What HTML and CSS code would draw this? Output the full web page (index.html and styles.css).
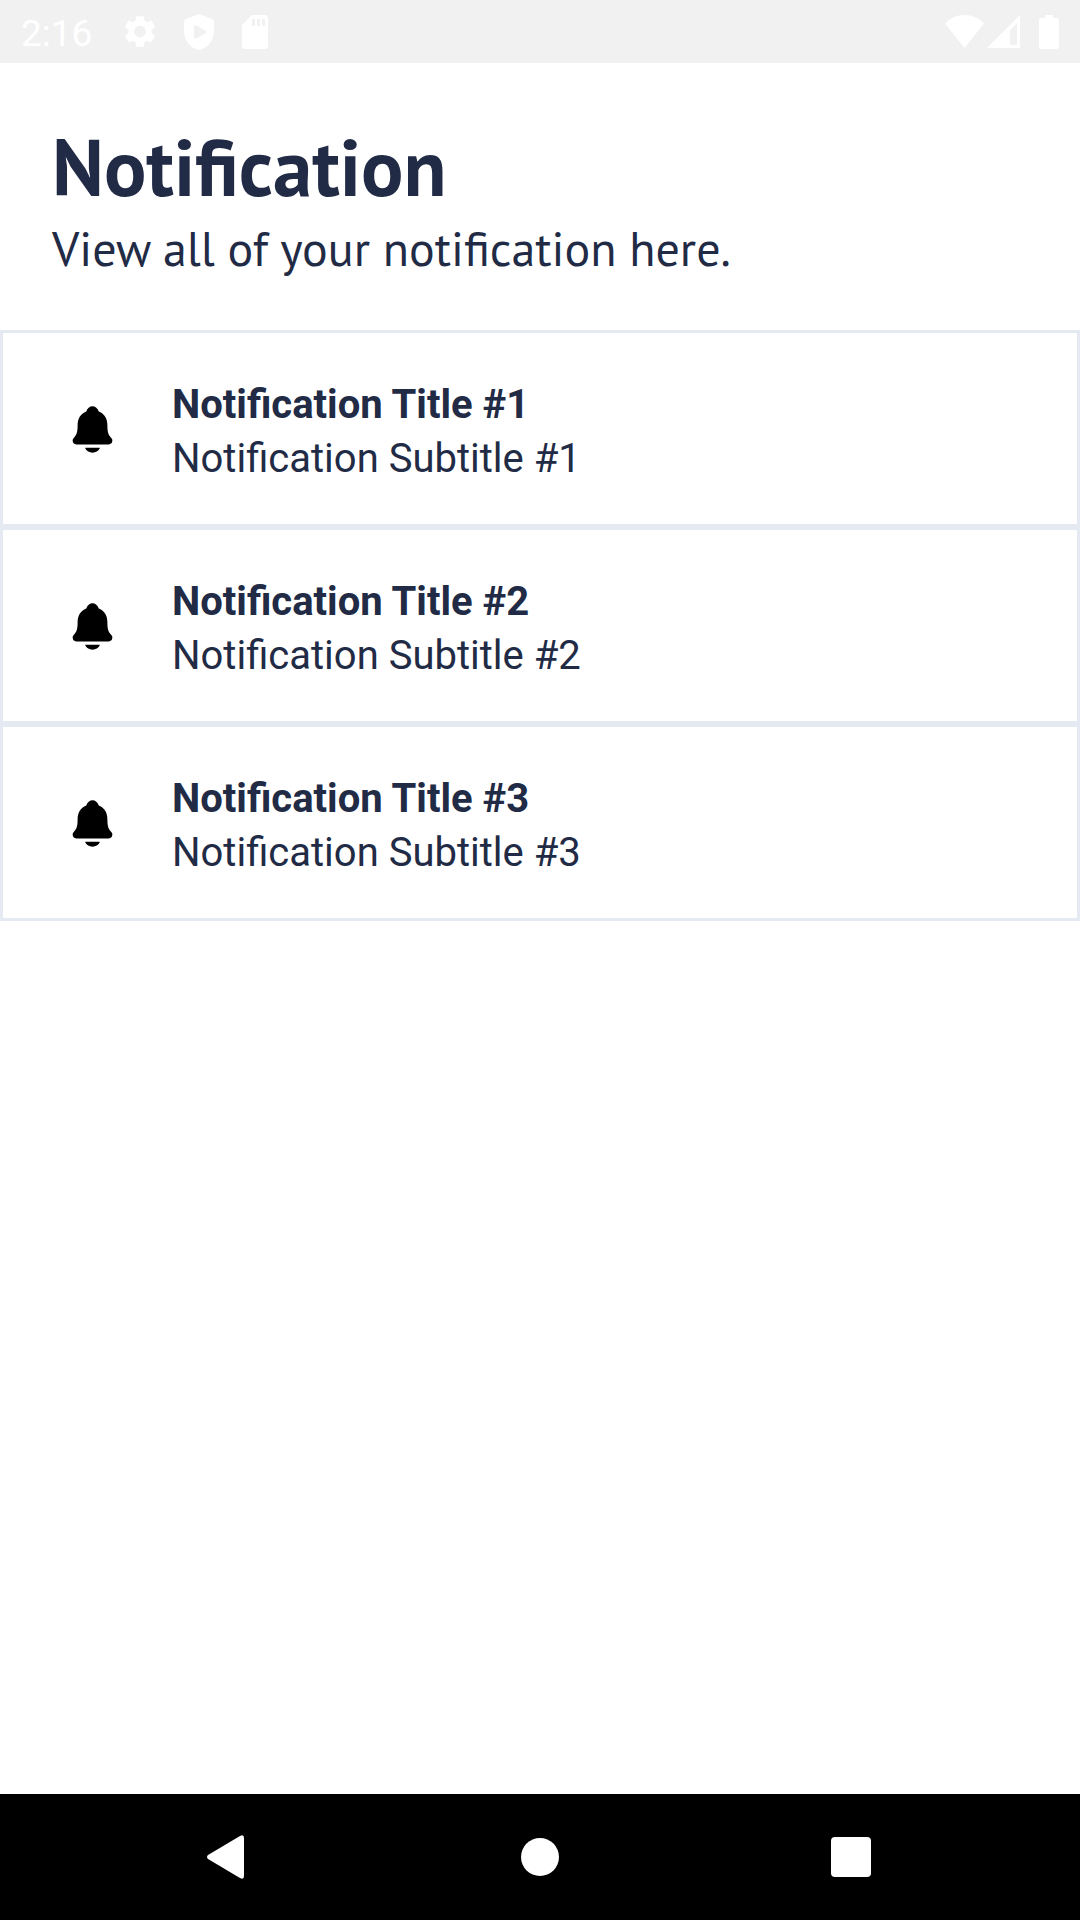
FILE: index.html
```html
<!DOCTYPE html>
<html lang="en">
<head>
<meta charset="utf-8">
<meta name="viewport" content="width=device-width, initial-scale=1">
<title>Notification</title>
<link rel="stylesheet" href="styles.css">
</head>
<body>
<svg class="sprite" aria-hidden="true">
  <symbol id="bell" viewBox="0 0 512 512"><path d="M440.08 341.31c-1.66-2-3.29-4-4.89-5.93-22-26.61-35.31-42.67-35.31-118 0-39-9.33-71-27.72-95-13.56-17.73-31.89-31.18-56.05-41.12a3 3 0 01-.82-.67C306.6 51.49 282.82 32 256 32s-50.59 19.49-59.28 48.56a3.13 3.13 0 01-.81.65c-56.38 23.21-83.78 67.74-83.78 136.14 0 75.36-13.29 91.42-35.31 118-1.6 1.93-3.23 3.89-4.89 5.93a35.16 35.16 0 00-4.65 37.62c6.17 13 19.32 21.07 34.33 21.07H410.5c14.94 0 28-8.06 34.19-21a35.17 35.17 0 00-4.61-37.66zM256 480a80.06 80.06 0 0070.44-42.13 4 4 0 00-3.54-5.87H189.12a4 4 0 00-3.55 5.87A80.06 80.06 0 00256 480z"/></symbol>
</svg>
<div class="screen">
  <div class="status-bar">
    <time class="clock">2:16</time>
    <div class="status-left">
      <svg class="gear" viewBox="2 2 20 20"><path d="M19.14 12.94c.04-.3.06-.61.06-.94 0-.32-.02-.64-.07-.94l2.03-1.58c.18-.14.23-.41.12-.61l-1.92-3.32c-.12-.22-.37-.29-.59-.22l-2.39.96c-.5-.38-1.03-.7-1.62-.94l-.36-2.54c-.04-.24-.24-.41-.48-.41h-3.84c-.24 0-.43.17-.47.41l-.36 2.54c-.59.24-1.13.57-1.62.94l-2.39-.96c-.22-.08-.47 0-.59.22L2.74 8.87c-.12.21-.08.47.12.61l2.03 1.58c-.05.3-.09.63-.09.94s.02.64.07.94l-2.03 1.58c-.18.14-.23.41-.12.61l1.92 3.32c.12.22.37.29.59.22l2.39-.96c.5.38 1.03.7 1.62.94l.36 2.54c.05.24.24.41.48.41h3.84c.24 0 .44-.17.47-.41l.36-2.54c.59-.24 1.13-.56 1.62-.94l2.39.96c.22.08.47 0 .59-.22l1.92-3.32c.12-.22.07-.47-.12-.61l-2.01-1.58zM12 15.6c-1.98 0-3.6-1.62-3.6-3.6s1.62-3.6 3.6-3.6 3.6 1.62 3.6 3.6-1.62 3.6-3.6 3.6z"/></svg>
      <svg class="shield" viewBox="0 0 30 36"><path fill-rule="evenodd" d="M15 0 28 5Q30 6 30 8V17C30 26 24 34 15 36 6 34 0 26 0 17V8Q0 6 2 5ZM10 13V23Q10 26 13 24L22 19Q24 18 22 17L13 12Q10 10 10 13Z"/></svg>
      <svg class="card" viewBox="0 0 26 34"><path fill-rule="evenodd" d="M10 0H23Q26 0 26 3V31Q26 34 23 34H3Q0 34 0 31V10ZM10 4V11H13V4ZM15 4V11H18V4ZM20 4V11H23V4Z"/></svg>
    </div>
    <div class="status-right">
      <svg class="wifi" viewBox="0 0 39 33"><path d="M0 8.500C11-2.800 28-2.800 39 8.500L19.500 33Z"/></svg>
      <svg class="signal" viewBox="0 0 33 33"><path fill-rule="evenodd" d="M33 0V33H0ZM30 8 23 15V30H30Z"/></svg>
      <svg class="battery" viewBox="0 0 20 34"><path d="M6 0H14V3H18Q20 3 20 5V32Q20 34 18 34H2Q0 34 0 32V5Q0 3 2 3H6Z"/></svg>
    </div>
  </div>
  <main class="content">
    <header class="page-header">
      <h1 class="page-title">Notification</h1>
      <p class="page-subtitle">View all of your notification here.</p>
    </header>
    <ul class="list">
      <li class="item">
        <svg class="bell"><use href="#bell"/></svg>
        <div class="item-text"><h2 class="item-title">Notification Title #1</h2><p class="item-subtitle">Notification Subtitle #1</p></div>
      </li>
      <li class="item">
        <svg class="bell"><use href="#bell"/></svg>
        <div class="item-text"><h2 class="item-title">Notification Title #2</h2><p class="item-subtitle">Notification Subtitle #2</p></div>
      </li>
      <li class="item">
        <svg class="bell"><use href="#bell"/></svg>
        <div class="item-text"><h2 class="item-title">Notification Title #3</h2><p class="item-subtitle">Notification Subtitle #3</p></div>
      </li>
    </ul>
  </main>
  <nav class="nav-bar">
    <button class="nav-button" type="button" aria-label="Back"><svg class="nav-icon" viewBox="0 0 44 44"><path d="M33 1Q37 -1 37 3V41Q37 45 33 43L1 24Q-1 22 1 20Z"/></svg></button>
    <button class="nav-button" type="button" aria-label="Home"><svg class="nav-icon" viewBox="0 0 44 44"><circle cx="22" cy="22" r="19"/></svg></button>
    <button class="nav-button" type="button" aria-label="Recent apps"><svg class="nav-icon" viewBox="0 0 44 44"><rect x="2" y="2" width="40" height="40" rx="4"/></svg></button>
  </nav>
</div>
</body>
</html>
```

FILE: styles.css
```css
* { box-sizing: border-box; }
body { margin: 0; background: #fff; color: #222b45; font-family: Roboto, sans-serif; }
h1, h2, p, ul { margin: 0; padding: 0; }
.sprite { display: none; }
.screen { display: flex; flex-direction: column; min-height: 100vh; }

.status-bar { display: flex; align-items: center; height: 63px; padding: 0 21px; background: #f1f1f1; color: #fff; fill: #fff; }
.clock { font-size: 37px; line-height: 63px; padding-top: 4px; }
.status-left, .status-right { display: flex; align-items: center; }
.status-left { gap: 28px; margin-left: 32px; }
.status-right { margin-left: auto; }
.gear { width: 32px; height: 33px; }
.shield { width: 30px; height: 36px; }
.card { width: 26px; height: 34px; }
.wifi { width: 39px; height: 33px; }
.signal { width: 33px; height: 33px; margin: 0 19px 0 3px; }
.battery { width: 20px; height: 34px; }

.content { flex: 1; }
.page-header { padding: 53px 52px 51px; font-family: "PT Sans", "Open Sans", sans-serif; }
.page-title { font-size: 79px; line-height: 102px; font-weight: 700; }
.page-subtitle { font-size: 48px; line-height: 61px; }

.list { list-style: none; }
.item { display: flex; align-items: center; gap: 53px; padding: 39px 63px 38px; border: 3px solid #e4e9f2; }
.bell { flex: none; width: 53px; height: 53px; fill: #000; }
.item-text { padding-top: 6px; }
.item-title, .item-subtitle { font-size: 40px; line-height: 54px; }
.item-title { font-weight: 700; }
.item-subtitle { font-weight: 400; }

.nav-bar { display: flex; justify-content: center; gap: 185px; height: 126px; background: #000; }
.nav-button { display: flex; align-items: center; justify-content: center; width: 126px; padding: 0; border: 0; background: none; }
.nav-icon { width: 44px; height: 44px; fill: #fff; }
```
